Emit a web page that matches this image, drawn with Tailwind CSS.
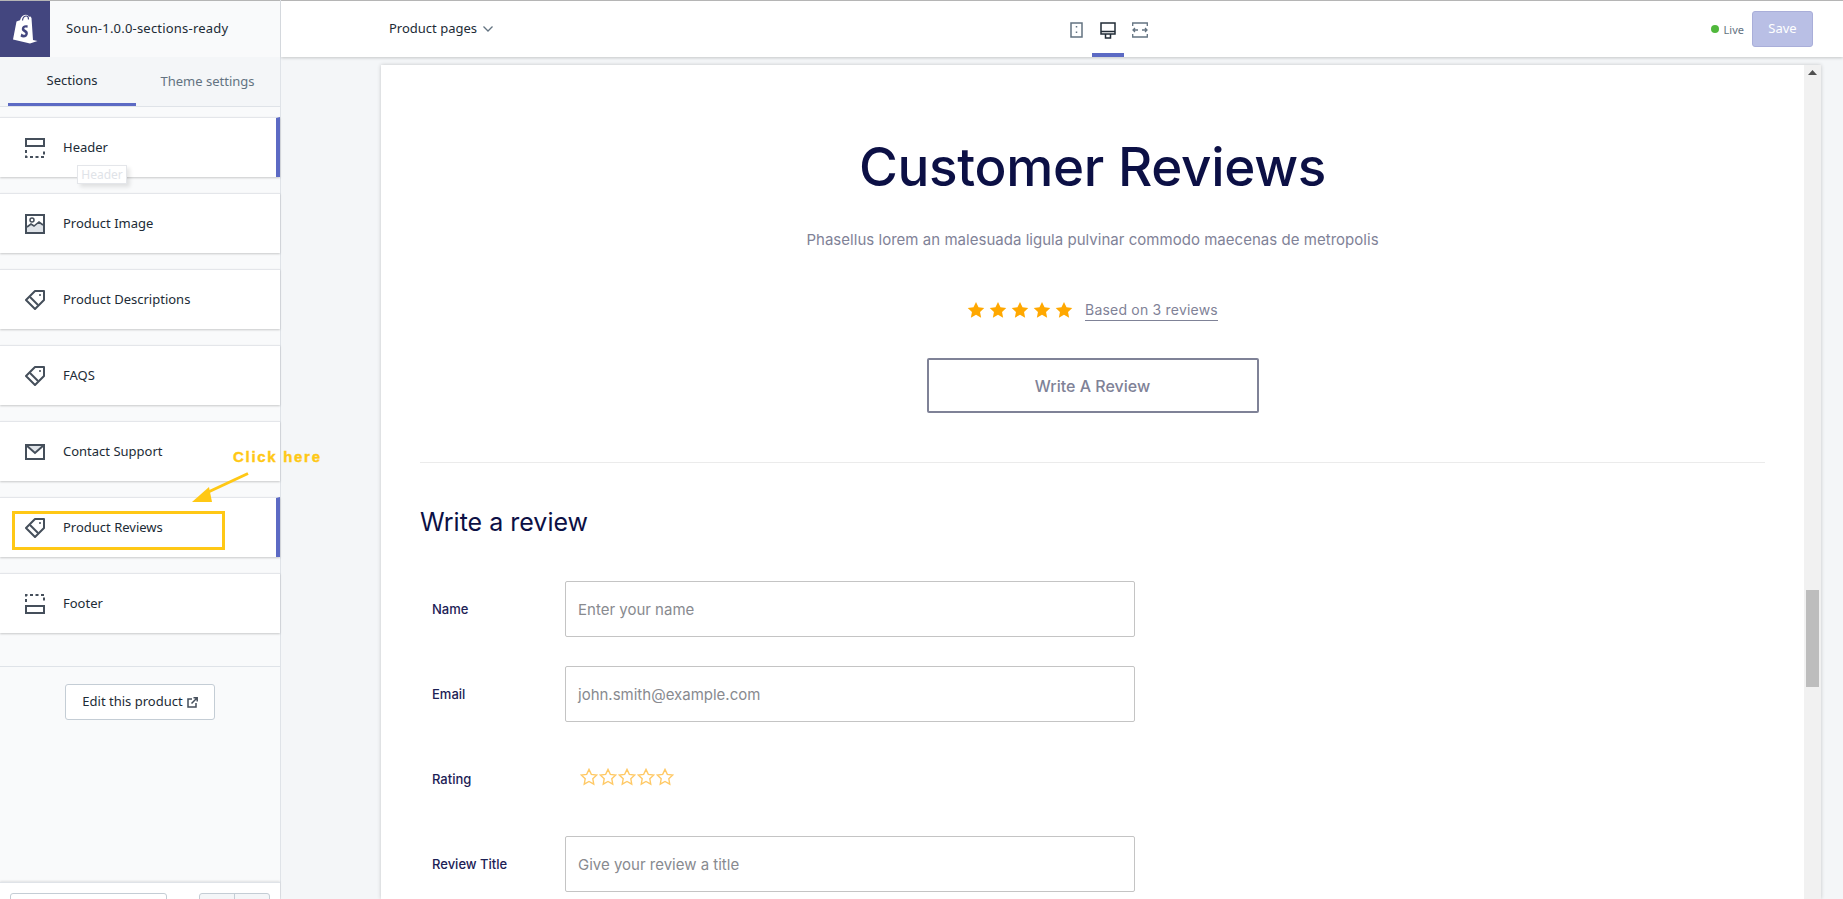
<!DOCTYPE html>
<html lang="en">
  <head>
    <meta charset="UTF-8" />
    <title>Theme editor</title>
    <script src="https://cdn.jsdelivr.net/npm/@tailwindcss/browser@4"></script>
  </head>
  <body class="h-[899px] overflow-hidden bg-[#f4f6f8] font-['Noto_Sans',sans-serif] text-[13px] text-[#212b36]">
    <div class="flex h-[899px] w-[1843px]">
      <!-- Sidebar -->
      <aside class="relative flex h-full w-[281px] shrink-0 flex-col border-r border-[#dfe3e8] bg-[#f9fafb]">
        <div class="flex h-[57px] shrink-0 items-center border-t border-[#b5b5b5] shadow-[0_1px_2px_rgba(0,0,0,0.15)]">
          <div class="flex h-full w-[50px] items-center justify-center bg-[#43467f]">
            <svg width="26" height="30" viewBox="0 0 26 30">
              <path fill="#fff" d="M1 25.5 4.500 7.500C6 7 7 6.600 8 6.200 9 2.500 11.500 .8 14 .8c1.400 0 2.400.8 3 2l1.500-.4 1 1.600L21 26l4.500 1-7.500 2.500z" />
              <path fill="#43467f" d="M15.800 11.500c-3.400-1-6 .9-6 3.600 0 2.800 3.600 3 3.600 4.700 0 1.300-1.900 1.500-4-.2l-.9 3c2.700 1.700 7.400 1 7.400-3.300 0-3.200-3.600-3.300-3.600-4.700 0-1.200 1.700-1.300 3-.6z" />
              <path fill="none" stroke="#43467f" stroke-width="1.200" d="M10.500 6.500C10.800 3.500 12.500 2 14.500 2c1.300 0 2 1.500 2 3.500" />
            </svg>
          </div>
          <span class="ml-4 text-[13px] tracking-[0.200px]">Soun-1.0.0-sections-ready</span>
        </div>

        <div class="flex h-[50px] shrink-0 border-b border-[#dfe3e8] bg-[#f4f6f8] px-2">
          <div class="flex w-[128px] items-center justify-center border-b-[3px] border-[#5c6ac4] pt-px">Sections</div>
          <div class="flex flex-1 items-center justify-center pl-[7px] text-[#637381]">Theme settings</div>
        </div>

        <div class="mt-[10px] flex flex-col gap-4">
          <div class="flex h-[60px] items-center border-t border-[#e4e6ea] border-r-[4px] border-r-[#5c6ac4] bg-white pl-[25px] shadow-[0_1px_2px_rgba(0,0,0,0.2)]">
            <svg class="w-5 h-5 text-[#454f5b]" viewBox="0 0 20 20" fill="none" stroke="currentColor" stroke-width="2">
              <path d="M1 1h18v7H1z" />
              <path stroke-dasharray="3 2.500" d="M1 12v7h18v-7" />
            </svg>
            <span class="ml-[18px]">Header</span>
          </div>
          <div class="flex h-[60px] items-center border-t border-[#e4e6ea] bg-white pl-[25px] shadow-[0_1px_2px_rgba(0,0,0,0.2)]">
            <svg class="w-5 h-5 text-[#454f5b]" viewBox="0 0 20 20">
              <path fill="#dfe3e8" d="M2 18v-5l4-3 3 2 5-4 4 3v7z" />
              <path fill="none" stroke="currentColor" stroke-width="1.600" d="M2 13l4-3 3 2 5-4 4 3" />
              <path fill="none" stroke="currentColor" stroke-width="2" d="M1 1h18v18H1z" />
              <circle cx="7" cy="6" r="2" fill="none" stroke="currentColor" stroke-width="1.500" />
            </svg>
            <span class="ml-[18px]">Product Image</span>
          </div>
          <div class="flex h-[60px] items-center border-t border-[#e4e6ea] bg-white pl-[25px] shadow-[0_1px_2px_rgba(0,0,0,0.2)]">
            <svg class="w-5 h-5 text-[#454f5b]" viewBox="0 0 20 20" fill="none" stroke="currentColor" stroke-width="2">
              <path stroke-linejoin="round" d="M10 1h9v9l-9 9-9-9z" />
              <path d="M5 7l8 8" />
              <circle cx="15" cy="5" r="1" fill="currentColor" stroke="none" />
            </svg>
            <span class="ml-[18px]">Product Descriptions</span>
          </div>
          <div class="flex h-[60px] items-center border-t border-[#e4e6ea] bg-white pl-[25px] shadow-[0_1px_2px_rgba(0,0,0,0.2)]">
            <svg class="w-5 h-5 text-[#454f5b]" viewBox="0 0 20 20" fill="none" stroke="currentColor" stroke-width="2">
              <path stroke-linejoin="round" d="M10 1h9v9l-9 9-9-9z" />
              <path d="M5 7l8 8" />
              <circle cx="15" cy="5" r="1" fill="currentColor" stroke="none" />
            </svg>
            <span class="ml-[18px]">FAQS</span>
          </div>
          <div class="flex h-[60px] items-center border-t border-[#e4e6ea] bg-white pl-[25px] shadow-[0_1px_2px_rgba(0,0,0,0.2)]">
            <svg class="w-5 h-4 text-[#454f5b]" viewBox="0 0 20 16">
              <path fill="#dfe3e8" d="M1 1h18l-9 8z" />
              <path fill="none" stroke="currentColor" stroke-width="2" d="M1 1h18v14H1zM1 1l9 8 9-8" />
            </svg>
            <span class="ml-[18px]">Contact Support</span>
          </div>
          <div class="flex h-[60px] items-center border-t border-[#e4e6ea] border-r-[4px] border-r-[#5c6ac4] bg-white pl-[25px] shadow-[0_1px_2px_rgba(0,0,0,0.2)]">
            <svg class="w-5 h-5 text-[#454f5b]" viewBox="0 0 20 20" fill="none" stroke="currentColor" stroke-width="2">
              <path stroke-linejoin="round" d="M10 1h9v9l-9 9-9-9z" />
              <path d="M5 7l8 8" />
              <circle cx="15" cy="5" r="1" fill="currentColor" stroke="none" />
            </svg>
            <span class="ml-[18px]">Product Reviews</span>
          </div>
          <div class="flex h-[60px] items-center border-t border-[#e4e6ea] bg-white pl-[25px] shadow-[0_1px_2px_rgba(0,0,0,0.2)]">
            <svg class="w-5 h-5 text-[#454f5b]" viewBox="0 0 20 20" fill="none" stroke="currentColor" stroke-width="2">
              <path stroke-dasharray="3 2.500" d="M1 8V1h18v7" />
              <path d="M1 12h18v7H1z" />
            </svg>
            <span class="ml-[18px]">Footer</span>
          </div>
        </div>

        <div class="mt-[33px] flex justify-center border-t border-[#dfe3e8] pt-[17px]">
          <button class="flex h-[36px] w-[150px] items-center justify-center gap-1 rounded-[3px] border border-[#c4cdd5] bg-white text-[13px]">
            Edit this product
            <svg class="w-[11px] h-[11px] text-[#454f5b]" viewBox="0 0 11 11" fill="none" stroke="currentColor" stroke-width="1.500">
              <path d="M5 2H1v8h8V6" />
              <path d="M4.500 6.500 10 1M6.500 .8h3.700v3.700" />
            </svg>
          </button>
        </div>

        <div class="mt-auto flex h-[17px] shrink-0 justify-between overflow-hidden border-t border-[#dfe3e8] bg-white pl-[10px] pr-[10px] pt-[10px] shadow-[0_-1px_2px_rgba(0,0,0,0.1)]">
          <div class="h-10 w-[157px] rounded-[3px] border border-[#c4cdd5] bg-white"></div>
          <div class="flex h-10 w-[71px] rounded-[3px] border border-[#c4cdd5] bg-[#f4f6f8]">
            <div class="w-1/2 border-r border-[#c4cdd5]"></div>
          </div>
        </div>

        <!-- Tooltip -->
        <div class="absolute left-[77px] top-[165px] flex h-[19px] w-[50px] items-center justify-center border border-[#e4e6ea] bg-white text-[12px] text-[#dfe3e8] shadow-[3px_3px_4px_rgba(0,0,0,0.1)]">Header</div>

        <!-- Annotation -->
        <div class="absolute left-[12px] top-[511px] h-[39px] w-[213px] border-[3px] border-[#ffc815]"></div>
        <span class="absolute left-[233px] top-[446px] whitespace-nowrap font-['Liberation_Sans',sans-serif] text-[15px] font-bold tracking-[1.700px] text-[#ffc815] [-webkit-text-stroke:0.400px_#ffc815]">Click here</span>
        <svg class="absolute left-[190px] top-[472px]" width="60" height="32" viewBox="0 0 60 32">
          <path fill="none" stroke="#ffc815" stroke-width="3" d="M58 1.500 14 22" />
          <path fill="#ffc815" d="M2 30 19 15 22 30z" />
        </svg>
      </aside>

      <!-- Main -->
      <main class="flex h-full flex-1 flex-col overflow-hidden">
        <header class="relative z-10 flex h-[57px] shrink-0 items-center border-t border-[#b5b5b5] bg-white pl-[108px] pr-[30px] shadow-[0_1px_3px_rgba(0,0,0,0.2)]">
          <span class="flex items-center gap-[6px] text-[13px]">
            Product pages
            <svg class="w-[10px] h-[6px] text-[#637381]" viewBox="0 0 10 6" fill="none" stroke="currentColor" stroke-width="1.300"><path d="M.5.500 5 5 9.500.500" /></svg>
          </span>

          <div class="ml-[567px] flex h-full items-end gap-0">
            <div class="flex h-full w-[32px] items-start justify-center pt-[21px]">
              <svg class="w-[13px] h-[16px] text-[#637381]" viewBox="0 0 13 16" fill="none" stroke="currentColor" stroke-width="1.500">
                <path d="M1 1h11v14H1z" />
                <path d="M6.500 4v1.500M6.500 9.500V11" />
              </svg>
            </div>
            <div class="flex h-full w-[32px] items-start justify-center border-b-[4px] border-[#5c6ac4] pt-[21px]">
              <svg class="w-4 h-[17px] text-[#212b36]" viewBox="0 0 16 17" fill="none" stroke="currentColor" stroke-width="1.500">
                <path d="M1 1h14v11H1zM1 9.500h14M5.500 12v4h5v-4" />
              </svg>
            </div>
            <div class="flex h-full w-[32px] items-start justify-center pt-[21px]">
              <svg class="w-4 h-4 text-[#637381]" viewBox="0 0 16 16" fill="none" stroke="currentColor" stroke-width="1.300">
                <path d="M.700 4V1h14.600v3M.700 12v3h14.600v-3" />
                <path d="M1 8h5M3 6 1 8l2 2M15 8h-5M13 6l2 2-2 2" />
              </svg>
            </div>
          </div>

          <div class="ml-auto flex items-center">
            <span class="h-2 w-2 rounded-full bg-[#50b83c]"></span>
            <span class="ml-[5px] mt-[2px] text-[11px] text-[#637381]">Live</span>
            <button class="ml-2 flex h-[36px] w-[61px] items-center justify-center rounded-[3px] border border-[#a9aed9] bg-[#b9bfe5] text-[13px] text-white">Save</button>
          </div>
        </header>

        <div class="flex flex-1 overflow-hidden pl-[100px] pr-[22px] pt-2">
          <div class="flex w-[1440px] shadow-[0_0_4px_rgba(0,0,0,0.2)]">
            <!-- Preview page -->
            <div class="flex-1 bg-white font-['Inter',sans-serif] text-[#0c1045]">
              <div class="flex flex-col items-center">
                <h1 class="mt-[76px] h-[52px] text-[53px] leading-[52px] font-medium tracking-[-0.300px] text-[#0c1045]">Customer Reviews</h1>
                <p class="mt-[37px] text-[15px] leading-[20px] tracking-[0.030px] text-[#7f8297]">Phasellus lorem an malesuada ligula pulvinar commodo maecenas de metropolis</p>
                <div class="mt-[48px] flex items-center">
                  <div class="flex gap-[4px]">
                    <svg class="w-[18px] h-[18px] text-[#ffa800]" viewBox="0 0 20 20" fill="currentColor"><path d="M10 1l2.800 5.900 6.400.800-4.700 4.400 1.200 6.400-5.700-3.100-5.700 3.100 1.200-6.400L.800 7.700l6.400-.800z" /></svg>
                    <svg class="w-[18px] h-[18px] text-[#ffa800]" viewBox="0 0 20 20" fill="currentColor"><path d="M10 1l2.800 5.900 6.400.800-4.700 4.400 1.200 6.400-5.700-3.100-5.700 3.100 1.200-6.400L.800 7.700l6.400-.800z" /></svg>
                    <svg class="w-[18px] h-[18px] text-[#ffa800]" viewBox="0 0 20 20" fill="currentColor"><path d="M10 1l2.800 5.900 6.400.800-4.700 4.400 1.200 6.400-5.700-3.100-5.700 3.100 1.200-6.400L.800 7.700l6.400-.800z" /></svg>
                    <svg class="w-[18px] h-[18px] text-[#ffa800]" viewBox="0 0 20 20" fill="currentColor"><path d="M10 1l2.800 5.900 6.400.800-4.700 4.400 1.200 6.400-5.700-3.100-5.700 3.100 1.200-6.400L.800 7.700l6.400-.800z" /></svg>
                    <svg class="w-[18px] h-[18px] text-[#ffa800]" viewBox="0 0 20 20" fill="currentColor"><path d="M10 1l2.800 5.900 6.400.800-4.700 4.400 1.200 6.400-5.700-3.100-5.700 3.100 1.200-6.400L.800 7.700l6.400-.800z" /></svg>
                  </div>
                  <span class="ml-[12px] mt-[2px] border-b border-[#7f8297] pb-0 text-[14px] leading-[20px] tracking-[0.200px] text-[#7f8297]">Based on 3 reviews</span>
                </div>
                <button class="mt-[37px] h-[55px] w-[332px] rounded-[2px] border-2 border-[#7f8297] text-[16px] font-medium text-[#7f8297]">Write A Review</button>
              </div>

              <div class="mx-[39px] mt-[49px] border-t border-[#ebebeb] pt-[42px]">
                <h2 class="text-[25px] leading-[34px] text-[#0c1045]">Write a review</h2>

                <div class="mt-[42px] flex flex-col gap-[29px]">
                  <div class="flex items-center">
                    <label class="w-[145px] pl-3 pt-px text-[13px] font-medium text-[#1c2155]">Name</label>
                    <div class="flex h-[56px] w-[570px] items-center rounded-[2px] border border-[#c4c4c4] pl-3 pt-[2px] text-[15px] text-[#888a8f]">Enter your name</div>
                  </div>
                  <div class="flex items-center">
                    <label class="w-[145px] pl-3 pt-px text-[13px] font-medium text-[#1c2155]">Email</label>
                    <div class="flex h-[56px] w-[570px] items-center rounded-[2px] border border-[#c4c4c4] pl-3 pt-[2px] text-[15px] text-[#888a8f]">john.smith@example.com</div>
                  </div>
                  <div class="flex h-[56px] items-center">
                    <label class="w-[145px] pl-3 pt-px text-[13px] font-medium text-[#1c2155]">Rating</label>
                    <div class="-mt-[5px] ml-[15px] flex gap-[1px]">
                      <svg class="w-[18px] h-[18px] text-[#ffc965]" viewBox="0 0 20 20" fill="none" stroke="currentColor" stroke-width="1.500"><path d="M10 1.500l2.600 5.500 6 .800-4.400 4.100 1.100 6-5.300-2.900-5.300 2.900 1.100-6L1.400 7.800l6-.800z" /></svg>
                      <svg class="w-[18px] h-[18px] text-[#ffc965]" viewBox="0 0 20 20" fill="none" stroke="currentColor" stroke-width="1.500"><path d="M10 1.500l2.600 5.500 6 .800-4.400 4.100 1.100 6-5.300-2.900-5.300 2.900 1.100-6L1.400 7.800l6-.800z" /></svg>
                      <svg class="w-[18px] h-[18px] text-[#ffc965]" viewBox="0 0 20 20" fill="none" stroke="currentColor" stroke-width="1.500"><path d="M10 1.500l2.600 5.500 6 .800-4.400 4.100 1.100 6-5.300-2.900-5.300 2.900 1.100-6L1.400 7.800l6-.800z" /></svg>
                      <svg class="w-[18px] h-[18px] text-[#ffc965]" viewBox="0 0 20 20" fill="none" stroke="currentColor" stroke-width="1.500"><path d="M10 1.500l2.600 5.500 6 .800-4.400 4.100 1.100 6-5.300-2.900-5.300 2.900 1.100-6L1.400 7.800l6-.800z" /></svg>
                      <svg class="w-[18px] h-[18px] text-[#ffc965]" viewBox="0 0 20 20" fill="none" stroke="currentColor" stroke-width="1.500"><path d="M10 1.500l2.600 5.500 6 .800-4.400 4.100 1.100 6-5.300-2.900-5.300 2.900 1.100-6L1.400 7.800l6-.800z" /></svg>
                    </div>
                  </div>
                  <div class="flex items-center">
                    <label class="w-[145px] pl-3 pt-px text-[13px] font-medium text-[#1c2155]">Review Title</label>
                    <div class="flex h-[56px] w-[570px] items-center rounded-[2px] border border-[#c4c4c4] pl-3 pt-[2px] text-[15px] text-[#888a8f]">Give your review a title</div>
                  </div>
                </div>
              </div>
            </div>

            <!-- Scrollbar -->
            <div class="flex w-[17px] shrink-0 flex-col items-center bg-[#f1f1f1]">
              <svg class="mt-[5px] w-[9px] h-[5px] text-[#505050]" viewBox="0 0 9 5" fill="currentColor"><path d="M4.500 0 9 5H0z" /></svg>
              <div class="mt-[515px] h-[97px] w-[13px] bg-[#bdbdbd]"></div>
            </div>
          </div>
        </div>
      </main>
    </div>
  </body>
</html>
